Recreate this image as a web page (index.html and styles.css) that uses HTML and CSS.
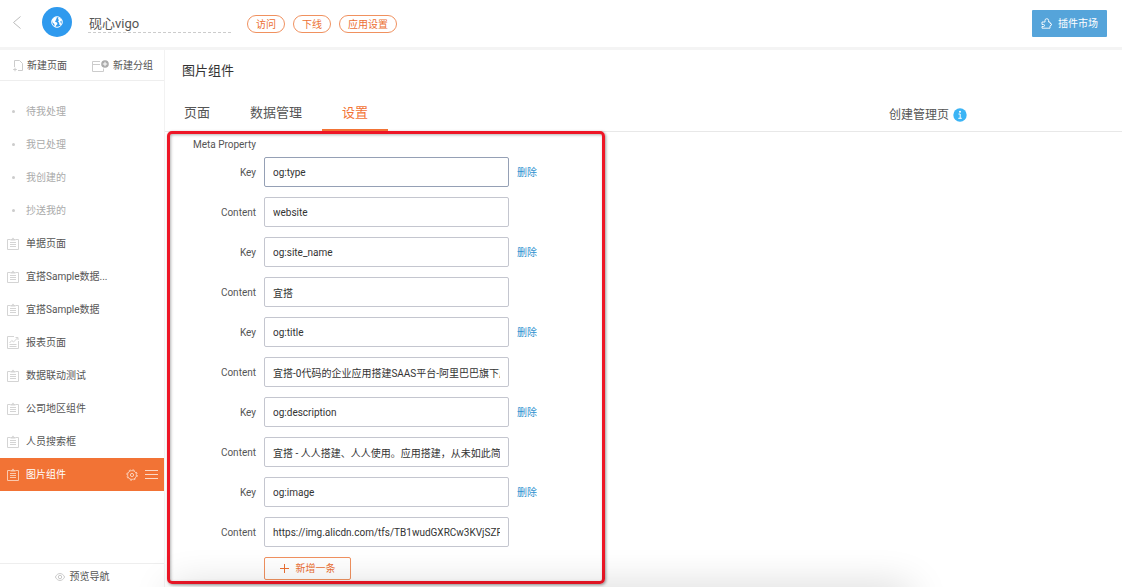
FILE: index.html
```html
<!DOCTYPE html>
<html lang="zh-CN">
<head>
<meta charset="utf-8">
<title>图片组件</title>
<link rel="stylesheet" href="styles.css">
</head>
<body>
<svg class="defs" aria-hidden="true">
  <symbol id="clipboard" viewBox="0 0 12 13">
    <path d="M3.500 2.500H.5v10h11v-10h-3" fill="none" stroke="currentColor"/><path d="M3.500 3.500V2h1.300L6 .6 7.200 2h1.300v1.500z" fill="currentColor"/><path d="M3 5.500h6M3 7.500h6M3 9.500h6" fill="none" stroke="currentColor"/>
  </symbol>
</svg>
<div class="page">
  <header class="header">
    <a class="back" href="#" aria-label="返回">
      <svg width="8" height="13" viewBox="0 0 8 13"><path d="M7.500.5l-7 6 7 6" fill="none" stroke="currentColor"/></svg>
    </a>
    <span class="avatar">
      <svg width="12" height="12" viewBox="0 0 12 12">
        <circle cx="6" cy="6" r="5.300" fill="none" stroke="#fff" stroke-width="1"/>
        <path d="M1 4C2 2 3.500 1 5.500 1L6 2 4.800 3.200 5.500 4 4 5 4.500 6 6 6.500 6.500 8 5 9.500 4.500 11 3.500 10.500 3.300 8 1.500 6.500zM7.500 1.200L10 3 11.200 5.500 10 5 9 6 10.500 7 9.500 9.500 8.300 8.500 8.200 6.800 7 5.500 8 4 7 3z" fill="#fff"/>
      </svg>
    </span>
    <input class="app-name" type="text" aria-label="应用名称" value="砚心vigo">
    <nav class="pills">
      <button class="pill" type="button">访问</button>
      <button class="pill" type="button">下线</button>
      <button class="pill" type="button">应用设置</button>
    </nav>
    <button class="market" type="button">
      <svg width="12" height="11" viewBox="0 0 12 11"><path d="M1 4h3V2.500a1.800 1.800 0 0 1 3.600 0V4H9v1.200l2 1.300-2 1.400v2.300H1V8.500h1.500a1 1 0 0 0 0-2H1z" fill="none" stroke="currentColor" stroke-width=".9"/></svg>
      插件市场
    </button>
  </header>
  <div class="body">
    <aside class="sidebar">
      <div class="tools">
        <button class="tool" type="button">
          <svg width="10" height="12" viewBox="0 0 10 12"><path d="M1.500 7V.5h5l3 3v7H5M.2 9.500h3.600M2 7.700v3.600" fill="none" stroke="currentColor"/></svg>
          新建页面
        </button>
        <button class="tool" type="button">
          <svg width="17" height="12" viewBox="0 0 17 12"><path d="M8 1.500H.5v10h11V8.500M.5 4.500H8" fill="none" stroke="currentColor"/><circle cx="13" cy="4" r="3.800" fill="#aaa"/><path d="M10.800 4h4.400M13 1.800v4.400" stroke="#fff"/></svg>
          新建分组
        </button>
      </div>
      <nav class="menu">
        <a class="item muted" href="#"><span class="icon"><i class="dot"></i></span>待我处理</a>
        <a class="item muted" href="#"><span class="icon"><i class="dot"></i></span>我已处理</a>
        <a class="item muted" href="#"><span class="icon"><i class="dot"></i></span>我创建的</a>
        <a class="item muted" href="#"><span class="icon"><i class="dot"></i></span>抄送我的</a>
        <a class="item" href="#"><svg class="icon"><use href="#clipboard"/></svg>单据页面</a>
        <a class="item" href="#"><svg class="icon"><use href="#clipboard"/></svg>宜搭Sample数据...</a>
        <a class="item" href="#"><svg class="icon"><use href="#clipboard"/></svg>宜搭Sample数据</a>
        <a class="item" href="#"><svg class="icon" viewBox="0 0 12 13"><path d="M7 .5H.5v12h11V5M2.500 7l2.300-2.500L6.500 6l4-4M8.500 1.500h2.500v2.500M2.500 8.500h7M2.500 10.500h7" fill="none" stroke="currentColor"/></svg>报表页面</a>
        <a class="item" href="#"><svg class="icon"><use href="#clipboard"/></svg>数据联动测试</a>
        <a class="item" href="#"><svg class="icon"><use href="#clipboard"/></svg>公司地区组件</a>
        <a class="item" href="#"><svg class="icon"><use href="#clipboard"/></svg>人员搜索框</a>
        <div class="item active">
          <svg class="icon"><use href="#clipboard"/></svg><a class="item-link" href="#" aria-current="page">图片组件</a>
          <button class="action" type="button" aria-label="设置">
            <svg width="12" height="12" viewBox="0 0 12 12" fill="none" stroke="currentColor"><circle cx="6" cy="6" r="4.400" stroke-width=".8"/><circle cx="6" cy="6" r="5.200" stroke-width="1" stroke-dasharray="2.040 2.040"/><circle cx="6" cy="6" r="1.600" stroke-width=".9"/></svg>
          </button>
          <button class="action" type="button" aria-label="菜单">
            <svg width="13" height="9" viewBox="0 0 13 9"><path d="M0 .5h13M0 4.500h13M0 8.500h13" stroke="currentColor"/></svg>
          </button>
        </div>
      </nav>
      <button class="preview" type="button">
        <svg width="10" height="8" viewBox="0 0 10 8" fill="none" stroke="currentColor" stroke-width=".8"><path d="M.4 4C2.500-.6 7.500-.6 9.600 4 7.500 8.600 2.500 8.600.4 4z"/><circle cx="5" cy="4" r="1.700"/></svg>
        预览导航
      </button>
    </aside>
    <main class="main">
      <h1 class="title">图片组件</h1>
      <div class="tabbar">
        <nav class="tabs">
          <a class="tab" href="#">页面</a>
          <a class="tab" href="#">数据管理</a>
          <a class="tab selected" href="#" aria-current="page">设置</a>
        </nav>
        <a class="create" href="#">创建管理页
          <svg width="14" height="14" viewBox="0 0 14 14"><circle cx="7" cy="7" r="6.700" fill="#3bb4f5"/><circle cx="7" cy="3.800" r="1" fill="#fff"/><path d="M5.500 6h1.700v4.300M5.300 10.300h3.500" fill="none" stroke="#fff" stroke-width="1"/></svg>
        </a>
      </div>
      <form class="panel">
        <h2 class="legend">Meta Property</h2>
        <div class="fields">
          <div class="field"><label for="k1">Key</label><input class="focused" id="k1" value="og:type"><a href="#">删除</a></div>
          <div class="field"><label for="c1">Content</label><input id="c1" value="website"></div>
          <div class="field"><label for="k2">Key</label><input id="k2" value="og:site_name"><a href="#">删除</a></div>
          <div class="field"><label for="c2">Content</label><input id="c2" value="宜搭"></div>
          <div class="field"><label for="k3">Key</label><input id="k3" value="og:title"><a href="#">删除</a></div>
          <div class="field"><label for="c3">Content</label><input id="c3" value="宜搭-0代码的企业应用搭建SAAS平台-阿里巴巴旗下产品"></div>
          <div class="field"><label for="k4">Key</label><input id="k4" value="og:description"><a href="#">删除</a></div>
          <div class="field"><label for="c4">Content</label><input id="c4" value="宜搭 - 人人搭建、人人使用。应用搭建，从未如此简单"></div>
          <div class="field"><label for="k5">Key</label><input id="k5" value="og:image"><a href="#">删除</a></div>
          <div class="field"><label for="c5">Content</label><input id="c5" value="https://img.alicdn.com/tfs/TB1wudGXRCw3KVjSZFlXXcJkFXa"></div>
          <button class="add" type="button">
            <svg width="9" height="9" viewBox="0 0 9 9"><path d="M0 4.500h9M4.500 0v9" stroke="currentColor"/></svg>
            新增一条
          </button>
        </div>
      </form>
    </main>
  </div>
</div>
</body>
</html>
```
FILE: styles.css
```css
* { box-sizing: border-box; }
body {
  margin: 0;
  background: #fff;
  color: #555;
  font: 10px/16px Roboto, "Noto Sans CJK SC", sans-serif;
}
a { color: inherit; text-decoration: none; }
button {
  display: inline-flex;
  align-items: center;
  justify-content: center;
  margin: 0;
  padding: 0;
  border: 0;
  background: none;
  color: inherit;
  font: inherit;
  cursor: pointer;
}
input { font: inherit; color: #333; outline: 0; }
svg { display: block; flex: none; }
.defs { position: absolute; width: 0; height: 0; }

.page {
  position: relative;
  display: flex;
  flex-direction: column;
  min-height: 100vh;
  overflow: hidden;
}
.page::after {
  content: "";
  position: absolute;
  left: 180px;
  right: 220px;
  bottom: -20px;
  height: 10px;
  box-shadow: 0 0 40px 8px rgba(0, 0, 0, .2);
  pointer-events: none;
}

.header {
  display: flex;
  align-items: center;
  height: 50px;
  padding: 0 15px 3px 13px;
  border-bottom: 3px solid #f4f4f4;
}
.back { color: #bbb; }
.avatar {
  display: grid;
  place-items: center;
  width: 30px;
  height: 30px;
  margin-left: 21px;
  border-radius: 50%;
  background: #2f9aee;
}
.app-name {
  width: 143px;
  height: 20px;
  margin: 2px 16px 0;
  padding: 0 1px;
  border: 0;
  border-bottom: 1px dashed #ccc;
  background: none;
  color: #555;
  font-size: 13px;
}
.pills { display: flex; gap: 8px; padding-top: 4px; }
.pill {
  height: 18px;
  padding: 2px 8px 0;
  border: 1px solid #f0915f;
  border-radius: 9px;
  color: #ec7033;
}
.market {
  gap: 5px;
  height: 27px;
  margin-top: 2px;
  margin-left: auto;
  padding: 1px 9px 0;
  border-radius: 1px;
  background: #55a4da;
  color: #fff;
}

.body { display: flex; flex: 1; }
.sidebar {
  display: flex;
  flex-direction: column;
  flex: none;
  width: 165px;
  border-right: 1px solid #f2f2f2;
}
.tools {
  display: flex;
  justify-content: space-between;
  height: 31px;
  padding: 1px 11px 0 13px;
  border-bottom: 1px solid #eee;
}
.tool { gap: 4px; }
.tool svg { color: #ccc; }
.menu { padding-top: 14px; }
.item {
  display: flex;
  align-items: center;
  height: 33px;
  padding: 0 6px 0 7px;
}
.item .icon {
  width: 12px;
  height: 13px;
  margin-right: 7px;
  color: #d4d4d4;
}
.item span.icon { display: grid; place-items: center; }
.dot { width: 3px; height: 3px; border-radius: 50%; background: #ccc; }
.muted { color: #aaa; }
.active { background: #f27335; color: #fff; }
.active .icon { color: #fbc9ae; }
.item-link { flex: 1; }
.action { margin-left: 7px; color: #fcd9c6; }
.preview {
  gap: 5px;
  height: 24px;
  margin-top: auto;
  border-top: 1px solid #eee;
  padding-top: 2px;
}
.preview svg { color: #bbb; }

.main { flex: 1; min-width: 0; }
.title {
  margin: 0;
  padding: 11px 17px 14px;
  color: #333;
  font-size: 13px;
  font-weight: 400;
  line-height: 20px;
}
.tabbar {
  display: flex;
  justify-content: space-between;
  height: 37px;
  padding-right: 155px;
  border-bottom: 1px solid #e8e8e8;
}
.tabs { display: flex; margin-left: -1px; }
.tab {
  padding: 0 20px;
  border-bottom: 2px solid transparent;
  font-size: 13px;
  line-height: 35px;
}
.selected { border-color: #f27335; color: #f27335; }
.create {
  display: flex;
  align-items: center;
  gap: 4px;
  padding-top: 4px;
  font-size: 12px;
}

.panel {
  max-width: 438px;
  margin: -1px 2px 3px;
  padding-bottom: 1px;
  border: 3px solid #ee1626;
  border-radius: 5px;
  box-shadow: 1px 1px 3px rgba(0, 0, 0, .4), inset 1px 1px 3px rgba(0, 0, 0, .3);
}
.legend {
  width: 86px;
  margin: 0 0 1px;
  font-size: 10px;
  font-weight: 400;
  line-height: 22px;
  text-align: right;
}
.fields { display: grid; gap: 10px; }
.field {
  display: grid;
  grid-template-columns: 86px minmax(0, 245px) auto;
  justify-content: start;
  align-items: center;
  gap: 8px;
}
.field label { padding-top: 2px; text-align: right; }
.field input {
  width: 100%;
  height: 30px;
  padding: 0 8px;
  border: 1px solid #c4c6cf;
  border-radius: 2px;
  background: #fff;
}
.field .focused { border-color: #95a0b5; }
.field a { padding-top: 2px; color: #2f91cf; }
.add {
  justify-self: start;
  gap: 7px;
  width: 87px;
  height: 23px;
  margin-left: 94px;
  border: 1px solid #f0915f;
  border-radius: 2px;
  color: #ec7033;
}
```
